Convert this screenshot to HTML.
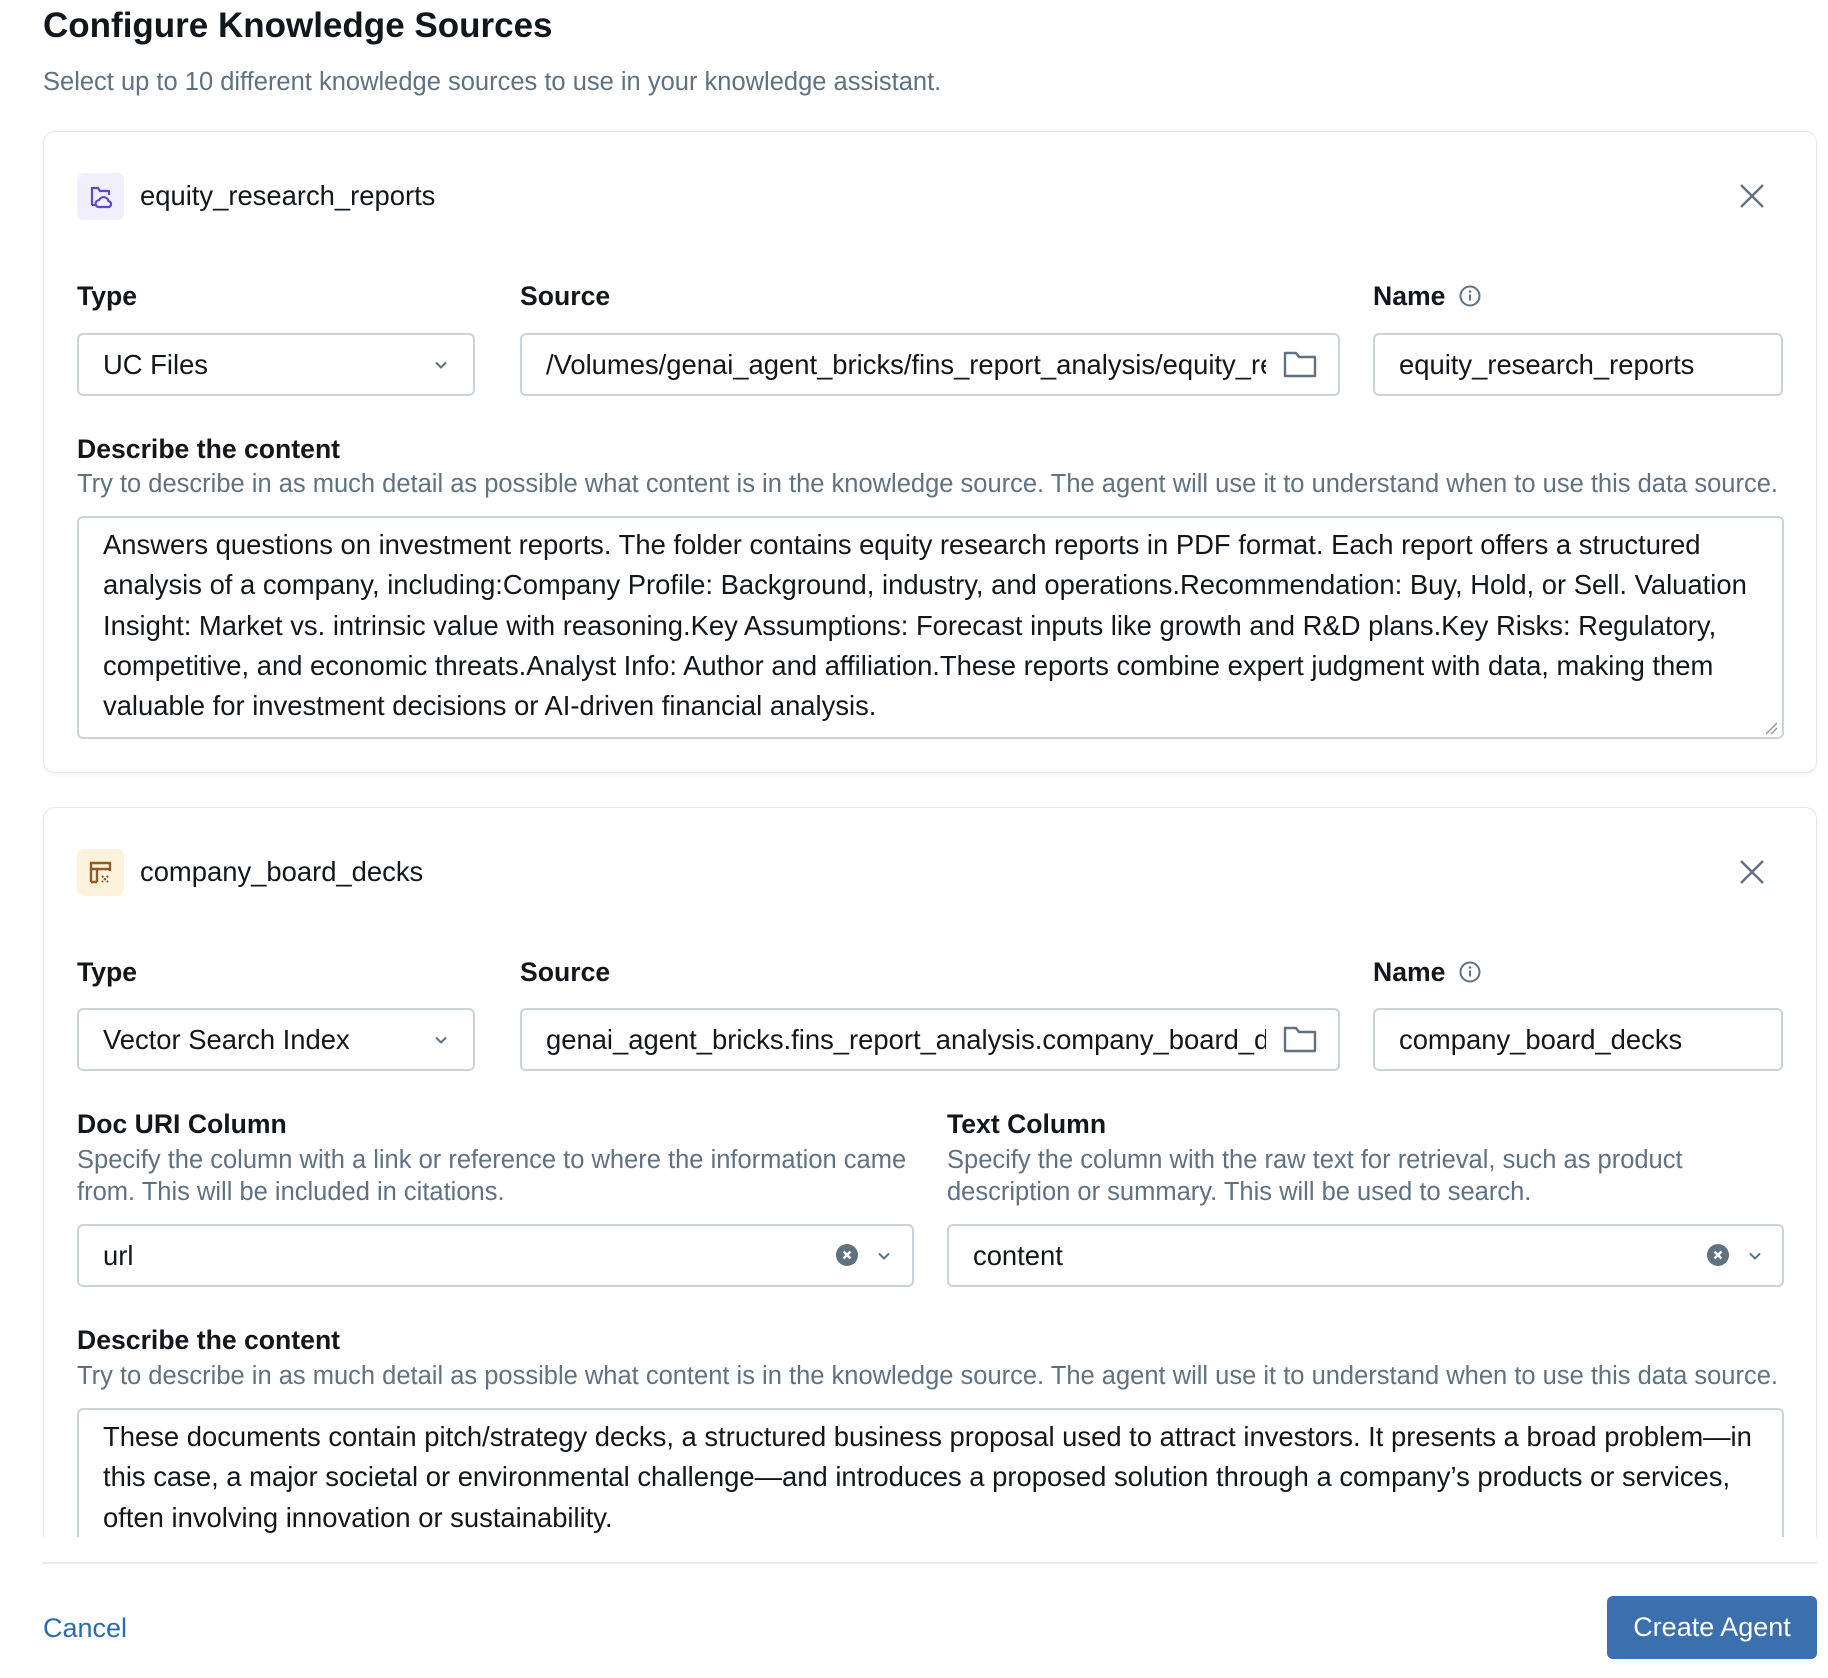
<!DOCTYPE html>
<html><head><meta charset="utf-8"><style>
*{box-sizing:border-box;margin:0;padding:0}
body{width:1828px;height:1678px;background:#fff;font-family:"Liberation Sans",sans-serif;color:#11171c;position:relative;overflow:hidden}
.a{position:absolute;white-space:nowrap}
.title{left:43px;top:4px;font-size:35px;font-weight:bold;line-height:44px}
.sub{left:43px;top:68px;font-size:25.5px;color:#5f7281;line-height:28px}
.card{position:absolute;left:43px;width:1774px;border:1.5px solid #e4e8ec;border-radius:12px;box-shadow:0 2px 4px rgba(0,0,0,.05)}
.ib{position:absolute;left:77px;width:47px;height:47px;border-radius:7px}
.nm{font-size:27.4px;line-height:30px}
.lb{font-size:26.6px;font-weight:bold;line-height:30px}
.hp{font-size:25.5px;color:#5f7281;line-height:32px}
.in{position:absolute;height:63px;border:2px solid #c9d3dc;border-radius:6px;font-size:27.4px;line-height:59px;padding-left:24px;white-space:nowrap;overflow:hidden;background:#fff}
.ta{position:absolute;left:77px;width:1707px;border:2px solid #c9d3dc;border-radius:6px;font-size:27.4px;line-height:40.3px;padding:7px 24px;white-space:nowrap;background:#fff;overflow:hidden}
.clip{position:absolute;left:0;top:0;width:1828px;height:1537px;overflow:hidden}
</style></head><body>
<div class="clip">
<div class="a title">Configure Knowledge Sources</div>
<div class="a sub">Select up to 10 different knowledge sources to use in your knowledge assistant.</div>

<div class="card" style="top:131px;height:642px"></div>
<div class="ib" style="top:173px;background:#f1effc"><svg width="47" height="47" viewBox="0 0 47 47"><path d="M15 32 V15 h6 l2 3 h9 v4" fill="none" stroke="#5b4cc4" stroke-width="2.2" stroke-linejoin="round"/><path d="M15 32 h3" stroke="#5b4cc4" stroke-width="2.2"/><path d="M21 34 a3.5 3.5 0 0 1 1-6.8 a5 5 0 0 1 9.5 1 a3 3 0 0 1 0.5 5.8 z" fill="none" stroke="#5b4cc4" stroke-width="2.2" stroke-linejoin="round"/></svg></div>
<div class="a nm" style="left:140px;top:181px">equity_research_reports</div>
<svg class="a" style="left:1738px;top:182px" width="28" height="28" viewBox="0 0 28 28"><path d="M3 3 L25 25 M25 3 L3 25" stroke="#5f7281" stroke-width="2.4"/></svg>

<div class="a lb" style="left:77px;top:281px">Type</div>
<div class="a lb" style="left:520px;top:281px">Source</div>
<div class="a lb" style="left:1373px;top:281px">Name</div>
<svg class="a" style="left:1458px;top:284px" width="24" height="24" viewBox="0 0 24 24"><circle cx="12" cy="12" r="9.5" fill="none" stroke="#5f7281" stroke-width="2"/><path d="M12 10.5v6" stroke="#5f7281" stroke-width="2"/><circle cx="12" cy="7.5" r="1.3" fill="#5f7281"/></svg>

<div class="in" style="left:77px;top:333px;width:398px">UC Files</div>
<svg class="a" style="left:433px;top:357px" width="16" height="16" viewBox="0 0 16 16"><path d="M3 5.5 L8 10.5 L13 5.5" fill="none" stroke="#5f7281" stroke-width="2"/></svg>
<div class="in" style="left:520px;top:333px;width:820px"><span style="display:inline-block;width:720px;overflow:hidden">/Volumes/genai_agent_bricks/fins_report_analysis/equity_research_reports</span></div>
<svg class="a" style="left:1282px;top:349px" width="36" height="30" viewBox="0 0 36 30"><path d="M3 4 h11 l3 4 h16 v19 h-30 z" fill="none" stroke="#5f7281" stroke-width="2.4" stroke-linejoin="round"/></svg>
<div class="in" style="left:1373px;top:333px;width:410px">equity_research_reports</div>

<div class="a lb" style="left:77px;top:434px">Describe the content</div>
<div class="a hp" style="left:77px;top:468px">Try to describe in as much detail as possible what content is in the knowledge source. The agent will use it to understand when to use this data source.</div>
<div class="ta" style="top:516px;height:223px">Answers questions on investment reports. The folder contains equity research reports in PDF format. Each report offers a structured<br>analysis of a company, including:Company Profile: Background, industry, and operations.Recommendation: Buy, Hold, or Sell. Valuation<br>Insight: Market vs. intrinsic value with reasoning.Key Assumptions: Forecast inputs like growth and R&amp;D plans.Key Risks: Regulatory,<br>competitive, and economic threats.Analyst Info: Author and affiliation.These reports combine expert judgment with data, making them<br>valuable for investment decisions or AI-driven financial analysis.</div>
<svg class="a" style="left:1764px;top:721px" width="14" height="14" viewBox="0 0 14 14"><path d="M2 13 L13 2 M7 13 L13 7" stroke="#8a99a6" stroke-width="1.4"/></svg>

<div class="card" style="top:807px;height:800px"></div>
<div class="ib" style="top:849px;background:#fdf3dd"><svg width="47" height="47" viewBox="0 0 47 47"><path d="M14 33 V14 h19 v8 M14 20 h19 M20 20 v13 M14 33 h6" fill="none" stroke="#8f5a2c" stroke-width="2.4"/><path d="M25 27 l6 6 M31 27 l-6 6" stroke="#8f5a2c" stroke-width="2" stroke-dasharray="2 1.5"/></svg></div>
<div class="a nm" style="left:140px;top:857px">company_board_decks</div>
<svg class="a" style="left:1738px;top:858px" width="28" height="28" viewBox="0 0 28 28"><path d="M3 3 L25 25 M25 3 L3 25" stroke="#5f7281" stroke-width="2.4"/></svg>

<div class="a lb" style="left:77px;top:957px">Type</div>
<div class="a lb" style="left:520px;top:957px">Source</div>
<div class="a lb" style="left:1373px;top:957px">Name</div>
<svg class="a" style="left:1458px;top:960px" width="24" height="24" viewBox="0 0 24 24"><circle cx="12" cy="12" r="9.5" fill="none" stroke="#5f7281" stroke-width="2"/><path d="M12 10.5v6" stroke="#5f7281" stroke-width="2"/><circle cx="12" cy="7.5" r="1.3" fill="#5f7281"/></svg>

<div class="in" style="left:77px;top:1008px;width:398px">Vector Search Index</div>
<svg class="a" style="left:433px;top:1032px" width="16" height="16" viewBox="0 0 16 16"><path d="M3 5.5 L8 10.5 L13 5.5" fill="none" stroke="#5f7281" stroke-width="2"/></svg>
<div class="in" style="left:520px;top:1008px;width:820px"><span style="display:inline-block;width:720px;overflow:hidden">genai_agent_bricks.fins_report_analysis.company_board_decks_index</span></div>
<svg class="a" style="left:1282px;top:1024px" width="36" height="30" viewBox="0 0 36 30"><path d="M3 4 h11 l3 4 h16 v19 h-30 z" fill="none" stroke="#5f7281" stroke-width="2.4" stroke-linejoin="round"/></svg>
<div class="in" style="left:1373px;top:1008px;width:410px">company_board_decks</div>

<div class="a lb" style="left:77px;top:1109px">Doc URI Column</div>
<div class="a hp" style="left:77px;top:1144px">Specify the column with a link or reference to where the information came<br>from. This will be included in citations.</div>
<div class="a lb" style="left:947px;top:1109px">Text Column</div>
<div class="a hp" style="left:947px;top:1144px">Specify the column with the raw text for retrieval, such as product<br>description or summary. This will be used to search.</div>

<div class="in" style="left:77px;top:1224px;width:837px">url</div>
<svg class="a" style="left:835px;top:1243px" width="24" height="24" viewBox="0 0 24 24"><circle cx="12" cy="12" r="11" fill="#5f7281"/><path d="M8.5 8.5 L15.5 15.5 M15.5 8.5 L8.5 15.5" stroke="#fff" stroke-width="2.4"/></svg>
<svg class="a" style="left:876px;top:1248px" width="16" height="16" viewBox="0 0 16 16"><path d="M3 5.5 L8 10.5 L13 5.5" fill="none" stroke="#5f7281" stroke-width="2"/></svg>
<div class="in" style="left:947px;top:1224px;width:837px">content</div>
<svg class="a" style="left:1706px;top:1243px" width="24" height="24" viewBox="0 0 24 24"><circle cx="12" cy="12" r="11" fill="#5f7281"/><path d="M8.5 8.5 L15.5 15.5 M15.5 8.5 L8.5 15.5" stroke="#fff" stroke-width="2.4"/></svg>
<svg class="a" style="left:1747px;top:1248px" width="16" height="16" viewBox="0 0 16 16"><path d="M3 5.5 L8 10.5 L13 5.5" fill="none" stroke="#5f7281" stroke-width="2"/></svg>

<div class="a lb" style="left:77px;top:1325px">Describe the content</div>
<div class="a hp" style="left:77px;top:1360px">Try to describe in as much detail as possible what content is in the knowledge source. The agent will use it to understand when to use this data source.</div>
<div class="ta" style="top:1408px;height:200px">These documents contain pitch/strategy decks, a structured business proposal used to attract investors. It presents a broad problem—in<br>this case, a major societal or environmental challenge—and introduces a proposed solution through a company’s products or services,<br>often involving innovation or sustainability.</div>
</div>

<div style="position:absolute;left:43px;top:1562px;width:1774px;height:2px;background:#e6ebef"></div>
<div class="a" style="left:43px;top:1613px;font-size:27px;color:#2a6cb3;line-height:30px">Cancel</div>
<div style="position:absolute;left:1607px;top:1596px;width:210px;height:63px;background:#3b6fae;border-radius:6px;color:#fff;font-size:27px;line-height:63px;text-align:center">Create Agent</div>
</body></html>
